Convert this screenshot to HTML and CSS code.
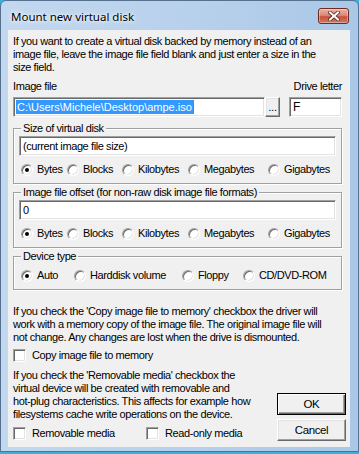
FILE: index.html
```html
<!DOCTYPE html>
<html lang="en">
<head>
  <meta charset="UTF-8">
  <title>Mount new virtual disk</title>
  <link rel="stylesheet" href="styles.css">
</head>
<body>

  <div class="window">
    <div class="titlebar">
      <span class="title">Mount new virtual disk</span>
      <button class="close-btn">
        <svg width="12" height="10" viewBox="0 0 12 10">
          <path d="M2 1.5 L10 8.5 M10 1.5 L2 8.5" stroke="#4a2a24" stroke-width="3.6" stroke-linecap="square"/>
          <path d="M2 1.5 L10 8.5 M10 1.5 L2 8.5" stroke="#ffffff" stroke-width="2" stroke-linecap="square"/>
        </svg>
      </button>
    </div>

    <div class="client">
      <p class="note">If you want to create a virtual disk backed by memory instead of an<br>image file, leave the image file field blank and just enter a size in the<br>size field.</p>

      <div class="file-labels">
        <span>Image file</span>
        <span>Drive letter</span>
      </div>
      <div class="file-row">
        <div class="field file-field"><span class="sel">C:\Users\Michele\Desktop\ampe.iso</span><span class="caret"></span></div>
        <button class="btn browse-btn">...</button>
        <div class="field drive-field">F</div>
      </div>

      <fieldset class="group">
        <legend>Size of virtual disk</legend>
        <div class="field">(current image file size)</div>
        <div class="radios units">
          <label class="radio"><span class="dot on"></span>Bytes</label>
          <label class="radio"><span class="dot"></span>Blocks</label>
          <label class="radio"><span class="dot"></span>Kilobytes</label>
          <label class="radio"><span class="dot"></span>Megabytes</label>
          <label class="radio"><span class="dot"></span>Gigabytes</label>
        </div>
      </fieldset>

      <fieldset class="group">
        <legend>Image file offset (for non-raw disk image file formats)</legend>
        <div class="field">0</div>
        <div class="radios units">
          <label class="radio"><span class="dot on"></span>Bytes</label>
          <label class="radio"><span class="dot"></span>Blocks</label>
          <label class="radio"><span class="dot"></span>Kilobytes</label>
          <label class="radio"><span class="dot"></span>Megabytes</label>
          <label class="radio"><span class="dot"></span>Gigabytes</label>
        </div>
      </fieldset>

      <fieldset class="group device">
        <legend>Device type</legend>
        <div class="radios types">
          <label class="radio"><span class="dot on"></span>Auto</label>
          <label class="radio"><span class="dot"></span>Harddisk volume</label>
          <label class="radio"><span class="dot"></span>Floppy</label>
          <label class="radio"><span class="dot"></span>CD/DVD-ROM</label>
        </div>
      </fieldset>

      <p class="note copy-note">If you check the 'Copy image file to memory' checkbox the driver will<br>work with a memory copy of the image file. The original image file will<br>not change. Any changes are lost when the drive is dismounted.</p>

      <label class="check copy-check"><span class="box"></span>Copy image file to memory</label>

      <div class="bottom">
        <div class="bottom-left">
          <p class="note media-note">If you check the 'Removable media' checkbox the<br>virtual device will be created with removable and<br>hot-plug characteristics. This affects for example how<br>filesystems cache write operations on the device.</p>
          <div class="checks">
            <label class="check"><span class="box"></span>Removable media</label>
            <label class="check"><span class="box"></span>Read-only media</label>
          </div>
        </div>
        <div class="buttons">
          <button class="btn default-btn">OK</button>
          <button class="btn">Cancel</button>
        </div>
      </div>
    </div>
  </div>

</body>
</html>
```

FILE: styles.css
```css
body {
  margin: 0;
  background-color: #38b2dc;
  font-family: "Liberation Sans", Arial, sans-serif;
  font-size: 11px;
  letter-spacing: -0.4px;
  color: #000;
}
.window {
  box-sizing: border-box;
  width: 359px;
  height: 452px;
  border: 1px solid #55718f;
  border-radius: 6px 6px 0 0;
  background: linear-gradient(to right, #c3d8ef, #b6cfeb 60%, #a9c7e7);
  padding: 0 8px 4px 7px;
  display: flex;
  flex-direction: column;
}
.titlebar {
  height: 29px;
  display: flex;
  align-items: center;
  justify-content: space-between;
  padding-left: 3px;
}
.title {
  font-family: "Noto Sans", "Open Sans", sans-serif;
  font-size: 11.5px;
  letter-spacing: 0;
  color: #000;
  text-shadow: 0 0 6px #fff, 0 0 3px #fff;
  margin-top: 1px;
}
.close-btn {
  width: 31px;
  height: 16px;
  margin-right: 1px;
  padding: 0;
  border: 1px solid #6b2b22;
  border-radius: 3px;
  background: linear-gradient(to bottom, #eab0a2 0%, #dc8a77 45%, #c7533e 55%, #d27561 100%);
  box-shadow: inset 0 0 0 1px rgba(255,255,255,0.35);
  display: flex;
  align-items: center;
  justify-content: center;
}
.client {
  flex: 1;
  background-color: #f0f0f0;
  padding: 5px 8px 0 5px;
}
.note {
  margin: 0;
  line-height: 13px;
  white-space: nowrap;
}
.file-labels {
  display: flex;
  justify-content: space-between;
  margin-top: 6px;
  line-height: 13px;
}
.file-row {
  display: flex;
  margin-top: 4px;
  height: 20px;
}
.field {
  box-sizing: border-box;
  height: 20px;
  background-color: #fff;
  border: 1px solid;
  border-color: #a0a0a0 #fff #fff #a0a0a0;
  box-shadow: inset 1px 1px #696969, inset -1px -1px #e3e3e3;
  padding: 0 3px;
  line-height: 18px;
  white-space: nowrap;
  overflow: hidden;
}
.file-field {
  width: 252px;
  padding-left: 2px;
  display: flex;
  align-items: center;
}
.sel {
  background-color: #3399ff;
  color: #fff;
  line-height: 14px;
  padding: 0 1px;
  letter-spacing: 0;
}
.caret {
  width: 1px;
  height: 14px;
  background-color: #cc6633;
}
.drive-field {
  width: 53px;
  margin-left: 9px;
  font-size: 12px;
}
.btn {
  box-sizing: border-box;
  font-family: inherit;
  font-size: 11.5px;
  letter-spacing: inherit;
  color: #000;
  background-color: #f0f0f0;
  border: 1px solid;
  border-color: #fff #696969 #696969 #fff;
  box-shadow: inset -1px -1px #a0a0a0, inset 1px 1px #e3e3e3;
  padding: 0;
}
.browse-btn {
  width: 15px;
  height: 20px;
  line-height: 14px;
}
.group {
  margin: 5px 0 0 0;
  padding: 1px 5px 7px 5px;
  border: 1px solid #a0a0a0;
  box-shadow: 1px 1px 0 #fff, inset 1px 1px 0 #fff;
}
.group + .group {
  margin-top: 2px;
}
.group legend {
  padding: 0 2px;
  margin-left: 2px;
  line-height: 13px;
  background-color: #f0f0f0;
}
.radios {
  display: grid;
  margin-top: 7px;
  padding-left: 2px;
  height: 13px;
}
.units {
  grid-template-columns: 46px 55px 66px 80px auto;
}
.types {
  grid-template-columns: 53px 108px 61px auto;
  margin-top: 5px;
}
.radio, .check {
  display: flex;
  align-items: center;
  white-space: nowrap;
  line-height: 13px;
}
.dot {
  box-sizing: border-box;
  position: relative;
  width: 12px;
  height: 12px;
  margin-right: 4px;
  border-radius: 50%;
  border: 1px solid;
  border-color: #a0a0a0 #fff #fff #a0a0a0;
  box-shadow: inset 1px 1px #696969, inset -1px -1px #e3e3e3;
  background-color: #fff;
}
.dot.on::after {
  content: "";
  position: absolute;
  left: 3px;
  top: 3px;
  width: 4px;
  height: 4px;
  border-radius: 50%;
  background-color: #000;
}
.copy-note {
  margin-top: 15px;
}
.copy-check {
  margin-top: 4px;
  height: 14px;
}
.box {
  box-sizing: border-box;
  width: 13px;
  height: 13px;
  margin-right: 6px;
  border: 1px solid;
  border-color: #a0a0a0 #fff #fff #a0a0a0;
  box-shadow: inset 1px 1px #696969, inset -1px -1px #e3e3e3;
  background-color: #fff;
}
.bottom {
  display: flex;
  justify-content: space-between;
  margin-top: 7px;
}
.checks {
  display: grid;
  grid-template-columns: 133px auto;
  margin-top: 6px;
  height: 13px;
}
.buttons {
  display: flex;
  flex-direction: column;
  gap: 4px;
  padding-top: 24px;
  margin-right: -4px;
}
.buttons .btn {
  width: 69px;
  height: 22px;
}
.default-btn {
  border: 1px solid #000;
  box-shadow: inset 1px 1px #fff, inset -1px -1px #696969, inset -2px -2px #a0a0a0;
}
```
